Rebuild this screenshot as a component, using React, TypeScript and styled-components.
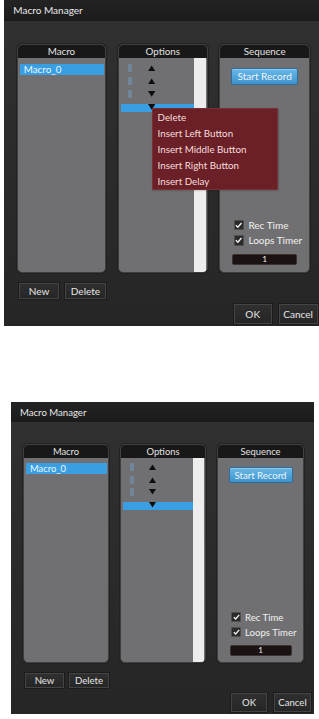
import React from 'react';
import styled, { createGlobalStyle } from 'styled-components';

const GlobalStyle = createGlobalStyle`
  html, body {
    margin: 0;
    padding: 0;
    background: #ffffff;
  }
  body {
    font-family: Lato, "Open Sans", sans-serif;
  }
`;

const Page = styled.div`
  width: 319px;
  height: 719px;
  overflow: hidden;
  background: #ffffff;
  display: flex;
  flex-direction: column;
`;

const Window = styled.div<{ $scale: number; $left: number; $top: number }>`
  zoom: ${p => p.$scale};
  position: relative;
  flex: none;
  width: 303px;
  height: 312px;
  margin-left: ${p => p.$left}px;
  margin-top: ${p => p.$top}px;
  display: flex;
  flex-direction: column;
  background: linear-gradient(#313131, #2a2a2a 60%, #262626);
  font-family: Lato, "Open Sans", sans-serif;
  font-size: 9.4px;
  color: #e2e2e2;
`;

const TitleBar = styled.div`
  flex: none;
  height: 20px;
  padding-left: 9px;
  display: flex;
  align-items: center;
  background: linear-gradient(#232323, #1b1b1b);
  color: #e8e8e8;
  font-size: 9.6px;
`;

const Panels = styled.div`
  display: grid;
  grid-template-columns: 86px 86px 87px;
  column-gap: 11px;
  height: 219px;
  margin: 22px 10px 0 12px;
`;

const Panel = styled.div`
  display: flex;
  flex-direction: column;
  min-height: 0;
  border: 1px solid #3f3f3f;
  border-radius: 5px;
  overflow: hidden;
  background: #707072;
  box-shadow: 0 0 0 1px #222;
`;

const PanelHeader = styled.div`
  flex: none;
  height: 13px;
  line-height: 13px;
  text-align: center;
  background: #181818;
  color: #e2e2e2;
`;

const MacroList = styled.div`
  flex: 1;
  padding: 5px 1px 0 2px;
`;

const MacroItem = styled.div<{ $selected?: boolean }>`
  height: 11px;
  line-height: 11px;
  padding-left: 4px;
  background: ${p => (p.$selected ? '#3a9fe2' : 'transparent')};
  color: #eef7fd;
`;

const OptionsBody = styled.div`
  flex: 1;
  display: flex;
`;

const OptionList = styled.div`
  flex: 1;
  padding: 3px 0 0 2px;
`;

const OptionRow = styled.div<{ $selected?: boolean }>`
  height: 12.5px;
  display: flex;
  align-items: center;
  background: ${p =>
    p.$selected
      ? 'linear-gradient(transparent 3px, #3a9fe2 3px, #3a9fe2 11px, transparent 11px)'
      : 'transparent'};
`;

const Mark = styled.span<{ $hidden?: boolean }>`
  width: 4px;
  height: 8px;
  margin-left: 7px;
  border-radius: 1px;
  background: ${p => (p.$hidden ? 'transparent' : '#7499bd')};
  opacity: 0.55;
`;

const Arrow = styled.svg`
  margin-left: 15px;
  width: 7px;
  height: 6px;
`;

const ScrollTrack = styled.div`
  flex: none;
  width: 11px;
  margin-right: 1px;
  background: #ededed;
`;

const SequenceBody = styled.div`
  flex: 1;
  display: flex;
  flex-direction: column;
  align-items: center;
  padding-bottom: 6px;
`;

const RecordButton = styled.div`
  margin-top: 9px;
  width: 64px;
  height: 16px;
  box-sizing: border-box;
  display: flex;
  align-items: center;
  justify-content: center;
  border: 1px solid #2f6e9c;
  border-radius: 2px;
  background: linear-gradient(#68b8e8, #3f92cb);
  box-shadow: inset 0 1px 0 rgba(255, 255, 255, 0.25);
  color: #eef7fd;
  font-size: 9.6px;
`;

const Spacer = styled.div`
  flex: 1;
`;

const CheckGroup = styled.div`
  align-self: flex-start;
  margin-left: 13px;
  display: flex;
  flex-direction: column;
  gap: 5px;
`;

const CheckRow = styled.div`
  height: 10px;
  display: flex;
  align-items: center;
  gap: 4px;
  color: #f0f0f0;
  font-size: 9.6px;
`;

const CheckBox = styled.span`
  width: 10px;
  height: 10px;
  box-sizing: border-box;
  display: flex;
  align-items: center;
  justify-content: center;
  border: 1px solid #4e4e4e;
  border-radius: 1px;
  background: #2a2a2a;
`;

const CountField = styled.div`
  margin-top: 8px;
  width: 62px;
  height: 11px;
  box-sizing: border-box;
  border: 1px solid #3b3131;
  border-radius: 2px;
  background: #1b1313;
  color: #f2f2f2;
  font-size: 8px;
  line-height: 9px;
  text-align: center;
`;

const Footer = styled.div`
  flex: 1;
  display: flex;
  justify-content: space-between;
  padding: 9px 2px 1px 13px;
`;

const ButtonGroup = styled.div<{ $bottom?: boolean; $gap: number }>`
  display: flex;
  gap: ${p => p.$gap}px;
  align-self: ${p => (p.$bottom ? 'flex-end' : 'flex-start')};
`;

const DialogButton = styled.button<{ $w: number; $h: number }>`
  width: ${p => p.$w}px;
  height: ${p => p.$h}px;
  padding: 0;
  border: 1px solid #1c1c1c;
  box-shadow: inset 0 0 0 1px #444;
  background: linear-gradient(#303030, #252525);
  color: #e6e6e6;
  font-family: Lato, "Open Sans", sans-serif;
  font-size: 9.6px;
`;

const ContextMenu = styled.div`
  position: absolute;
  left: 142px;
  top: 103px;
  width: 120px;
  height: 79px;
  box-sizing: border-box;
  padding: 1px 0;
  border: 1px solid #7a2f35;
  background: #6b1f26;
  box-shadow: 1px 1px 2px rgba(0, 0, 0, 0.4);
`;

const MenuItem = styled.div`
  height: 15.3px;
  line-height: 15.3px;
  padding-left: 4px;
  color: #f4dede;
  font-size: 9.4px;
  white-space: nowrap;
`;

const options = [
  { dir: 'up' },
  { dir: 'up' },
  { dir: 'down' },
  { dir: 'down', selected: true },
];

const TriangleIcon = ({ dir }: { dir: string }) => (
  <Arrow viewBox="0 0 7 6">
    {dir === 'up' ? <polygon points="3.5,0.5 7,6 0,6" fill="#0d0d0d" /> : <polygon points="0,0 7,0 3.5,5.5" fill="#0d0d0d" />}
  </Arrow>
);

const Check = () => (
  <svg width="7" height="6" viewBox="0 0 7 6">
    <path d="M0.8 3.2 L2.7 5 L6.2 0.9" fill="none" stroke="#f4f4f4" strokeWidth="1.3" />
  </svg>
);

const MacroManager: React.FC<{ scale: number; left: number; top: number; withMenu?: boolean }> = ({ scale, left, top, withMenu }) => (
  <Window $scale={scale} $left={left} $top={top}>
    <TitleBar>Macro Manager</TitleBar>
    <Panels>
      <Panel>
        <PanelHeader>Macro</PanelHeader>
        <MacroList>
          <MacroItem $selected>Macro_0</MacroItem>
        </MacroList>
      </Panel>
      <Panel>
        <PanelHeader>Options</PanelHeader>
        <OptionsBody>
          <OptionList>
            {options.map((o, i) => (
              <OptionRow key={i} $selected={o.selected}>
                <Mark $hidden={o.selected} />
                <TriangleIcon dir={o.dir} />
              </OptionRow>
            ))}
          </OptionList>
          <ScrollTrack />
        </OptionsBody>
      </Panel>
      <Panel>
        <PanelHeader>Sequence</PanelHeader>
        <SequenceBody>
          <RecordButton>Start Record</RecordButton>
          <Spacer />
          <CheckGroup>
            <CheckRow>
              <CheckBox><Check /></CheckBox>
              Rec Time
            </CheckRow>
            <CheckRow>
              <CheckBox><Check /></CheckBox>
              Loops Timer
            </CheckRow>
          </CheckGroup>
          <CountField>1</CountField>
        </SequenceBody>
      </Panel>
    </Panels>
    <Footer>
      <ButtonGroup $gap={3}>
        <DialogButton $w={41} $h={17}>New</DialogButton>
        <DialogButton $w={42} $h={17}>Delete</DialogButton>
      </ButtonGroup>
      <ButtonGroup $bottom $gap={5}>
        <DialogButton $w={38} $h={21}>OK</DialogButton>
        <DialogButton $w={39} $h={21}>Cancel</DialogButton>
      </ButtonGroup>
    </Footer>
    {withMenu && (
      <ContextMenu>
        <MenuItem>Delete</MenuItem>
        <MenuItem>Insert Left Button</MenuItem>
        <MenuItem>Insert Middle Button</MenuItem>
        <MenuItem>Insert Right Button</MenuItem>
        <MenuItem>Insert Delay</MenuItem>
      </ContextMenu>
    )}
  </Window>
);

export default function App() {
  return (
    <Page>
      <GlobalStyle />
      <MacroManager scale={1.045} left={3.8} top={0} withMenu />
      <MacroManager scale={1} left={11} top={76} />
    </Page>
  );
}
